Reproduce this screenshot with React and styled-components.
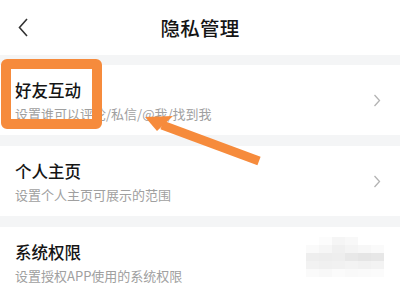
import React from "react";
import styled, { createGlobalStyle } from "styled-components";

const GlobalStyle = createGlobalStyle`
  html, body {
    margin: 0;
    padding: 0;
    background: #ffffff;
  }
  body {
    font-family: "Noto Sans CJK SC", "Noto Sans", "Liberation Sans", sans-serif;
  }
`;

const items = [
  { title: "好友互动", desc: "设置谁可以评论/私信/@我/找到我", arrow: true },
  { title: "个人主页", desc: "设置个人主页可展示的范围", arrow: true },
  { title: "系统权限", desc: "设置授权APP使用的系统权限", arrow: false, blur: true },
];

// mosaic cells for the blurred watermark in the last row
const mosaic = [
  "#fff", "#fcfcfc", "#f5f5f5", "#f8f8f8", "#fff", "#fff",
  "#fafafa", "#f6f6f6", "#f0f0f0", "#f4f4f4", "#f7f7f7", "#fafafa",
  "#eeeeee", "#ededed", "#eeeeee", "#e8e8e8", "#e5e5e5", "#e7e7e7",
  "#f2f2f2", "#f0f0f0", "#f1f1f1", "#f3f3f3", "#f1f1f1", "#f3f3f3",
  "#fafafa", "#f8f8f8", "#fbfbfb", "#f9f9f9", "#fafafa", "#fbfbfb",
];

const App = () => {
  return (
    <Page>
      <GlobalStyle />
      <Header>
        <BackButton>
          <svg width="12" height="20" viewBox="0 0 12 20">
            <path d="M10 2 L2.5 10.5 L10 19" fill="none" stroke="#333" strokeWidth="1.6" />
          </svg>
        </BackButton>
        <Title>隐私管理</Title>
      </Header>

      {items.map((item, idx) => (
        <React.Fragment key={item.title}>
          <Band $first={idx === 0} />
          <Row>
            <TextBlock>
              <RowTitle>{item.title}</RowTitle>
              <RowDesc>{item.desc}</RowDesc>
            </TextBlock>
            {item.arrow && (
              <svg width="8" height="13" viewBox="0 0 8 13">
                <path d="M1.5 1 L6.5 6.5 L1.5 12" fill="none" stroke="#b3b3b3" strokeWidth="1.3" />
              </svg>
            )}
            {item.blur && (
              <Mosaic>
                {mosaic.map((c, i) => (
                  <Cell key={i} $color={c} />
                ))}
              </Mosaic>
            )}
          </Row>
        </React.Fragment>
      ))}

      <Highlight />
      <Pointer width="400" height="285" viewBox="0 0 400 285">
        <line x1="162" y1="125" x2="259" y2="161" stroke="#f68b3c" strokeWidth="9" />
        <polygon points="145,117 173,116 157,131" fill="#f68b3c" />
      </Pointer>
    </Page>
  );
};

export default App;

const Page = styled.div`
  position: relative;
  width: 400px;
  height: 285px;
  overflow: hidden;
  background: #ffffff;
`;

const Header = styled.div`
  height: 55px;
  display: flex;
  align-items: center;
  justify-content: center;
  position: relative;
`;

const BackButton = styled.div`
  position: absolute;
  left: 17px;
  top: 17px;
  display: flex;
`;

const Title = styled.div`
  font-size: 19.5px;
  font-weight: 500;
  color: #151515;
  letter-spacing: 0.3px;
  margin-top: -1px;
`;

const Band = styled.div`
  height: ${(p) => (p.$first ? "10px" : "11px")};
  background: #f4f5f6;
`;

const Row = styled.div`
  height: 70px;
  display: flex;
  align-items: center;
  padding: 0 19px 0 15px;
`;

const TextBlock = styled.div`
  flex: 1;
  display: flex;
  flex-direction: column;
  align-self: flex-start;
  padding-top: 14px;
`;

const RowTitle = styled.div`
  font-size: 16.5px;
  font-weight: 500;
  line-height: 22px;
  color: #151515;
`;

const RowDesc = styled.div`
  font-size: 13px;
  line-height: 16px;
  color: #a0a0a0;
  margin-top: 5px;
`;

const Mosaic = styled.div`
  display: grid;
  grid-template-columns: repeat(6, 13px);
  grid-auto-rows: 8px;
  align-self: flex-start;
  margin-top: 10px;
  margin-right: -3px;
`;

const Cell = styled.div`
  background: ${(p) => p.$color};
`;

const Highlight = styled.div`
  position: absolute;
  left: 1px;
  top: 59px;
  width: 81px;
  height: 50px;
  border: 10px solid #f68b3c;
  border-radius: 6px;
`;

const Pointer = styled.svg`
  position: absolute;
  left: 0;
  top: 0;
  pointer-events: none;
`;
